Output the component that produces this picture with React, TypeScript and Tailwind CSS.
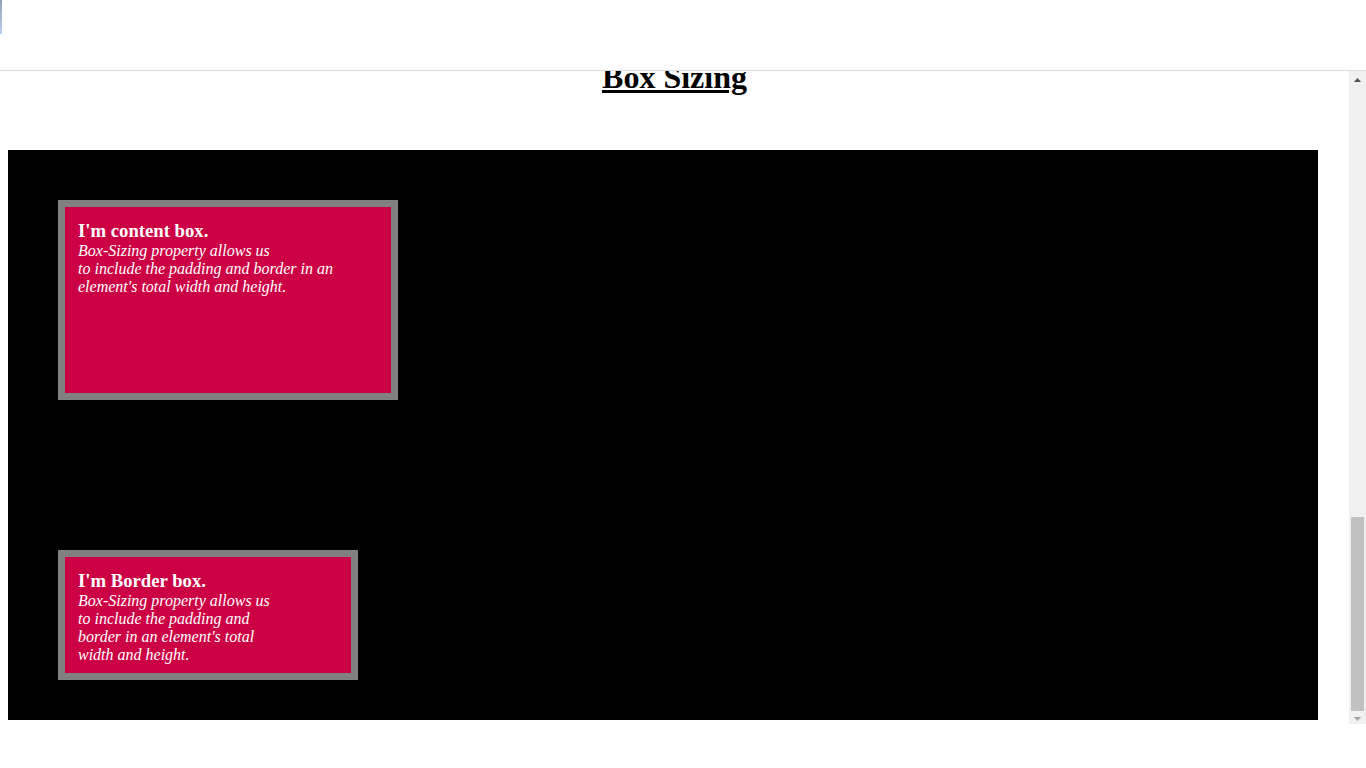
import React from "react";

type BoxProps = {
  title: string;
  lines: string[];
  className: string;
};

const SizingBox = ({ title, lines, className }: BoxProps) => {
  return (
    <div
      className={`border-[7px] border-[#808080] bg-[#cc0044] p-[13px] text-white ${className}`}
    >
      <h3 className="text-[18.72px] font-bold leading-[21.5px] whitespace-nowrap">{title}</h3>
      <p className="text-[16px] italic leading-[18px] whitespace-nowrap">
        {lines.map((line, i) => (
          <React.Fragment key={i}>
            {line}
            {i < lines.length - 1 && <br />}
          </React.Fragment>
        ))}
      </p>
    </div>
  );
};

const Scrollbar = () => {
  return (
    <div className="w-[17px] h-[653px] bg-[#f0f0f0] flex flex-col shrink-0">
      <div className="h-[17px] flex items-center justify-center">
        <svg width="7" height="4" viewBox="0 0 7 4">
          <path d="M3.5 0 L7 4 L0 4 Z" fill="#505050" />
        </svg>
      </div>
      <div className="flex-1" />
      <div className="h-[194px] mx-[2px] bg-[#c1c1c1]" />
      <div className="h-[13px] flex items-center justify-center pt-[2px]">
        <svg width="7" height="4" viewBox="0 0 7 4">
          <path d="M0 0 L7 0 L3.5 4 Z" fill="#a3a3a3" />
        </svg>
      </div>
    </div>
  );
};

const App = () => {
  return (
    <div className="w-[1366px] h-[768px] bg-white flex flex-col overflow-hidden font-['Liberation_Serif',serif] text-black">
      <header className="h-[71px] shrink-0 border-b border-[#dadada]">
        <div className="w-[2px] h-[34px] bg-gradient-to-b from-[#8ea3ba] to-[#b8d1ee]" />
      </header>
      <div className="flex flex-1 min-h-0">
        <main className="flex-1 overflow-hidden">
          <h1 className="-mt-[12px] text-[32px] font-bold leading-[37px] text-center underline">
            Box Sizing
          </h1>
          <section className="mt-[54px] ml-2 w-[1310px] h-[570px] bg-black pt-[50px] pl-[50px] flex flex-col gap-[150px]">
            <SizingBox
              className="w-[340px] h-[200px]"
              title="I'm content box."
              lines={[
                "Box-Sizing property allows us",
                "to include the padding and border in an",
                "element's total width and height.",
              ]}
            />
            <SizingBox
              className="w-[300px] h-[130px]"
              title="I'm Border box."
              lines={[
                "Box-Sizing property allows us",
                "to include the padding and",
                "border in an element's total",
                "width and height.",
              ]}
            />
          </section>
        </main>
        <Scrollbar />
      </div>
    </div>
  );
};

export default App;
